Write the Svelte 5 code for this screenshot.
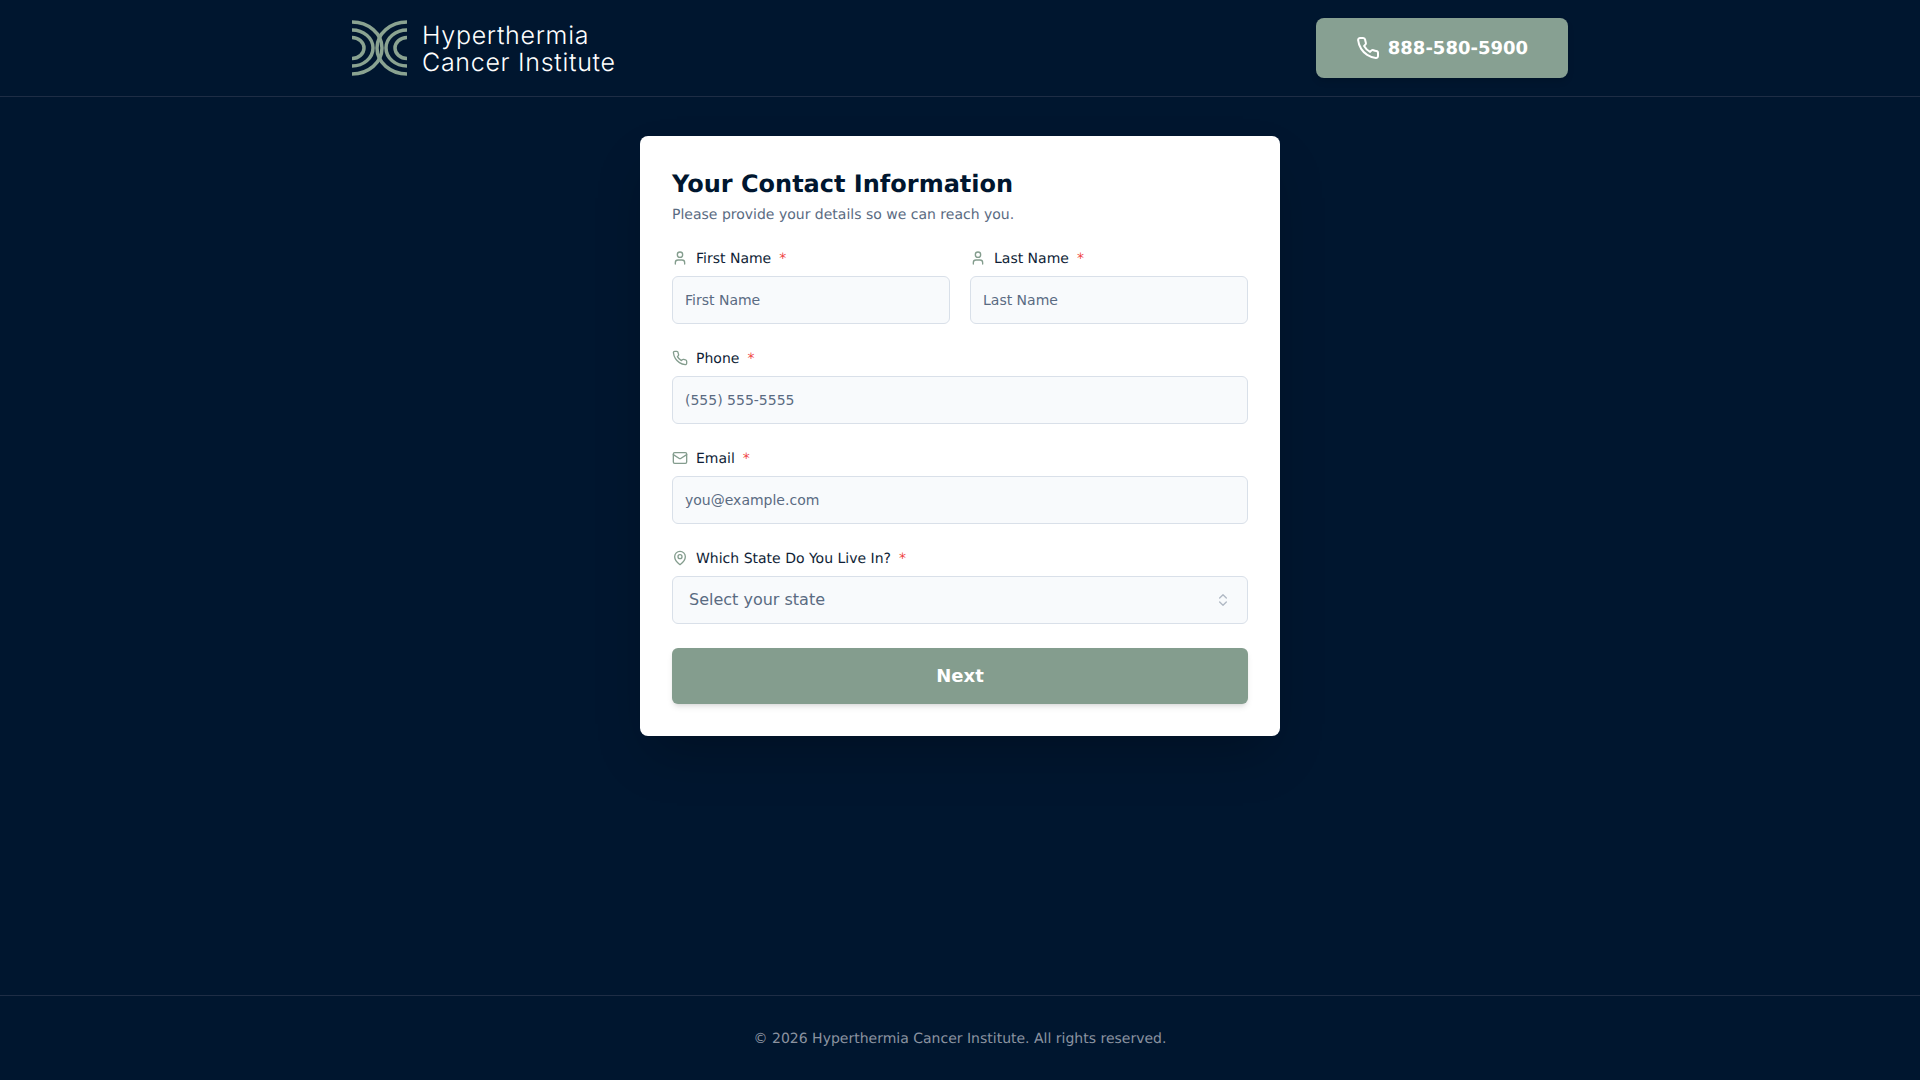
<script>
  const states = ["Alabama", "Alaska", "Arizona", "California", "Florida", "New York", "Texas"];

  const phonePath =
    "M22 16.92v3a2 2 0 0 1-2.18 2 19.79 19.79 0 0 1-8.63-3.07 19.5 19.5 0 0 1-6-6 19.79 19.79 0 0 1-3.07-8.67A2 2 0 0 1 4.11 2h3a2 2 0 0 1 2 1.72 12.84 12.84 0 0 0 .7 2.81 2 2 0 0 1-.45 2.11L8.09 9.91a16 16 0 0 0 6 6l1.27-1.27a2 2 0 0 1 2.11-.45 12.84 12.84 0 0 0 2.81.7A2 2 0 0 1 22 16.92z";

  // arcs of the logo mark: horizontal reach, vertical radius
  const arcs = [
    [30, 26],
    [21, 18],
    [12, 10.5],
  ];
</script>

{#snippet userIcon()}
  <svg class="icon" viewBox="0 0 24 24">
    <path d="M19 21v-2a4 4 0 0 0-4-4H9a4 4 0 0 0-4 4v2" />
    <circle cx="12" cy="7" r="4" />
  </svg>
{/snippet}

{#snippet phoneIcon()}
  <svg class="icon" viewBox="0 0 24 24"><path d={phonePath} /></svg>
{/snippet}

{#snippet mailIcon()}
  <svg class="icon" viewBox="0 0 24 24">
    <rect x="2" y="4" width="20" height="16" rx="2" />
    <path d="m22 7-8.97 5.7a1.94 1.94 0 0 1-2.06 0L2 7" />
  </svg>
{/snippet}

{#snippet pinIcon()}
  <svg class="icon" viewBox="0 0 24 24">
    <path d="M20 10c0 6-8 12-8 12s-8-6-8-12a8 8 0 0 1 16 0Z" />
    <circle cx="12" cy="10" r="3" />
  </svg>
{/snippet}

{#snippet label(icon, text, id)}
  <label class="label" for={id}>
    {@render icon()}
    <span>{text}</span>
    <span class="req">*</span>
  </label>
{/snippet}

<div class="page">
  <header>
    <div class="bar">
      <a class="logo" href="#top">
        <svg class="mark" viewBox="0 0 55 56">
          {#each arcs as [rx, ry]}
            <path d="M0 {28 - ry}A{rx} {ry} 0 0 1 0 {28 + ry}" />
            <path d="M55 {28 - ry}A{rx} {ry} 0 0 0 55 {28 + ry}" />
          {/each}
        </svg>
        <span class="logo-text">Hyperthermia<br />Cancer Institute</span>
      </a>
      <a class="call" href="tel:8885805900">
        <svg class="call-icon" viewBox="0 0 24 24"><path d={phonePath} /></svg>
        888-580-5900
      </a>
    </div>
  </header>

  <main>
    <form class="card">
      <h1>Your Contact Information</h1>
      <p class="sub">Please provide your details so we can reach you.</p>

      <div class="fields">
        <div class="two">
          <div class="field">
            {@render label(userIcon, "First Name", "first")}
            <input id="first" type="text" placeholder="First Name" />
          </div>
          <div class="field">
            {@render label(userIcon, "Last Name", "last")}
            <input id="last" type="text" placeholder="Last Name" />
          </div>
        </div>
        <div class="field">
          {@render label(phoneIcon, "Phone", "phone")}
          <input id="phone" type="tel" placeholder="(555) 555-5555" />
        </div>
        <div class="field">
          {@render label(mailIcon, "Email", "email")}
          <input id="email" type="email" placeholder="you@example.com" />
        </div>
        <div class="field">
          {@render label(pinIcon, "Which State Do You Live In?", "state")}
          <div class="select-wrap">
            <select id="state">
              <option value="">Select your state</option>
              {#each states as s}
                <option>{s}</option>
              {/each}
            </select>
            <svg class="chevrons" viewBox="0 0 24 24">
              <path d="m7 15 5 5 5-5" />
              <path d="m7 9 5-5 5 5" />
            </svg>
          </div>
        </div>
        <button class="next" type="button">Next</button>
      </div>
    </form>
  </main>

  <footer>© 2026 Hyperthermia Cancer Institute. All rights reserved.</footer>
</div>

<style>
  :global(body) {
    margin: 0;
    background: #00162f;
    font-family: "DejaVu Sans", sans-serif;
    text-rendering: geometricPrecision;
  }

  .page {
    min-height: 1080px;
    display: flex;
    flex-direction: column;
    box-sizing: border-box;
  }

  header {
    border-bottom: 1px solid #1e2d45;
  }

  .bar {
    width: 1216px;
    margin: 0 auto;
    height: 96px;
    display: flex;
    align-items: center;
    justify-content: space-between;
  }

  .logo {
    display: flex;
    align-items: center;
    gap: 15px;
    text-decoration: none;
  }

  .mark {
    width: 55px;
    height: 56px;
    fill: none;
    stroke: #8aa391;
    stroke-width: 3.5;
  }

  .logo-text {
    padding-top: 4px;
    font-family: "Inter", sans-serif;
    font-size: 25px;
    font-weight: 300;
    line-height: 27px;
    letter-spacing: 0.7px;
    color: #fff;
  }

  .call {
    display: flex;
    align-items: center;
    gap: 8px;
    padding: 16px 40px 15px;
    border-radius: 8px;
    background: #87a092;
    color: #fff;
    font-size: 18px;
    font-weight: 700;
    line-height: 29px;
    text-decoration: none;
    box-shadow: 0 4px 6px rgba(0, 0, 0, 0.1);
  }

  .call-icon {
    width: 24px;
    height: 24px;
    margin-bottom: 1px;
    fill: none;
    stroke: #fff;
    stroke-width: 2;
    stroke-linecap: round;
    stroke-linejoin: round;
  }

  main {
    flex: 1;
    display: flex;
    justify-content: center;
    align-items: flex-start;
    padding-top: 39px;
  }

  .card {
    width: 640px;
    box-sizing: border-box;
    padding: 32px;
    background: #fff;
    border-radius: 8px;
    box-shadow: 0 25px 50px -12px rgba(0, 0, 0, 0.25);
  }

  h1 {
    margin: 0;
    font-size: 24px;
    line-height: 32px;
    font-weight: 700;
    color: #00162f;
  }

  .sub {
    margin: 4px 0 22px;
    font-size: 14px;
    line-height: 22px;
    color: #5a6b82;
  }

  .fields {
    display: flex;
    flex-direction: column;
    gap: 24px;
  }

  .two {
    display: grid;
    grid-template-columns: 1fr 1fr;
    gap: 20px;
  }

  .field {
    display: flex;
    flex-direction: column;
    gap: 8px;
  }

  .label {
    display: flex;
    align-items: flex-start;
    gap: 8px;
    height: 20px;
    font-size: 14px;
    line-height: 22px;
    font-weight: 500;
    color: #0f1e36;
  }

  .icon {
    width: 16px;
    height: 16px;
    margin-top: 2px;
    fill: none;
    stroke: #849d8e;
    stroke-width: 2;
    stroke-linecap: round;
    stroke-linejoin: round;
  }

  .req {
    color: #ef4444;
  }

  input {
    box-sizing: border-box;
    width: 100%;
    height: 48px;
    padding: 0 12px;
    border: 1px solid #d9e0e9;
    border-radius: 6px;
    background: #f8fafc;
    font: inherit;
    font-size: 14px;
    color: #0f1e36;
    outline: none;
  }

  input::placeholder {
    color: #5a6b82;
    opacity: 1;
  }

  .select-wrap {
    position: relative;
  }

  select {
    box-sizing: border-box;
    width: 100%;
    height: 48px;
    padding: 0 16px 2px;
    border: 1px solid #d9e0e9;
    border-radius: 6px;
    background: #f8fafc;
    font: inherit;
    font-size: 16px;
    color: #5a6b82;
    appearance: none;
    outline: none;
  }

  .chevrons {
    position: absolute;
    right: 17px;
    top: 16px;
    width: 16px;
    height: 16px;
    fill: none;
    stroke: #b0b8c4;
    stroke-width: 2;
    stroke-linecap: round;
    stroke-linejoin: round;
    pointer-events: none;
  }

  .next {
    height: 56px;
    padding: 0 0 1px;
    border: none;
    border-radius: 6px;
    background: #849d8e;
    color: #fff;
    font: inherit;
    font-size: 18px;
    font-weight: 700;
    box-shadow: 0 4px 6px -1px rgba(0, 0, 0, 0.1), 0 2px 4px -2px rgba(0, 0, 0, 0.1);
  }

  footer {
    border-top: 1px solid #1e2d45;
    padding: 32px 0 30px;
    text-align: center;
    font-size: 14px;
    line-height: 22px;
    color: #8b93a0;
  }
</style>
